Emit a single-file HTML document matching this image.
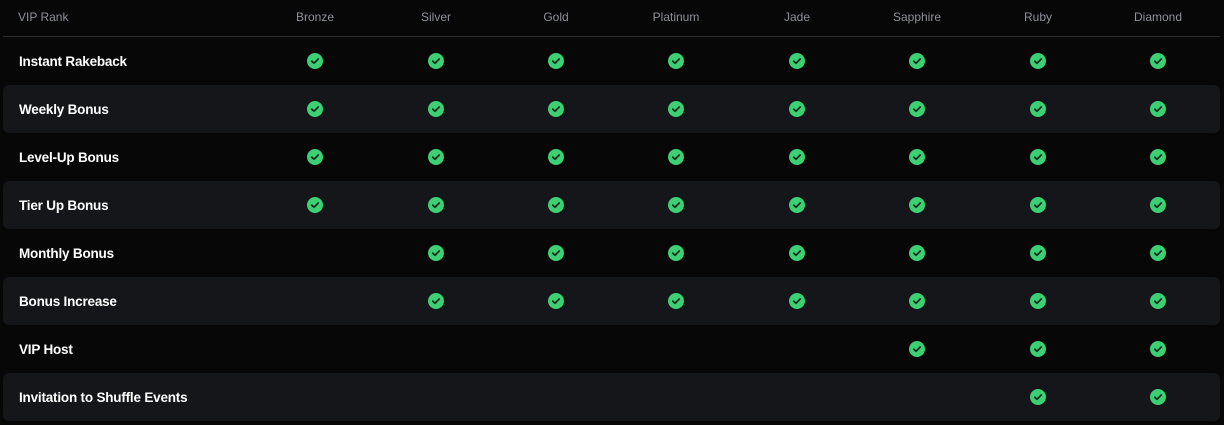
<!DOCTYPE html>
<html><head><meta charset="utf-8"><style>
body{margin:0;width:1224px;height:425px;background:#070708;font-family:"Liberation Sans",sans-serif;position:relative;overflow:hidden}
.h{position:absolute;top:10px;font-size:12px;color:#8d9097;transform:translateX(-50%);white-space:nowrap}
.line{position:absolute;left:3px;right:4px;top:36px;height:1px;background:#2a2c30}
.row{position:absolute;left:3px;width:1217px;height:48px;border-radius:6px}
.s{background:#15161a}
.l{position:absolute;left:16px;top:1px;line-height:48px;font-size:13.5px;font-weight:bold;color:#fff;letter-spacing:-0.2px}
.c{position:absolute;top:16px;width:16px;height:16px;margin-left:-8px}
</style></head><body>
<div class="h" style="left:0;transform:none;left:18px">VIP Rank</div>
<div class="h" style="left:315px">Bronze</div>
<div class="h" style="left:436px">Silver</div>
<div class="h" style="left:556px">Gold</div>
<div class="h" style="left:676px">Platinum</div>
<div class="h" style="left:797px">Jade</div>
<div class="h" style="left:917px">Sapphire</div>
<div class="h" style="left:1038px">Ruby</div>
<div class="h" style="left:1158px">Diamond</div>
<div class="line"></div>
<div id="rows"></div>
<script>
var rows=[["Instant Rakeback",0],["Weekly Bonus",0],["Level-Up Bonus",0],["Tier Up Bonus",0],["Monthly Bonus",1],["Bonus Increase",1],["VIP Host",5],["Invitation to Shuffle Events",6]];
var xs=[315,436,556,676,797,917,1038,1158];
var svg='<svg viewBox="0 0 16 16" width="16" height="16"><circle cx="8" cy="8" r="8" fill="#3ccf74"/><path d="M4.8 8.2l2.2 2.1 4.2-4.3" fill="none" stroke="#0d2a18" stroke-width="1.7" stroke-linecap="round" stroke-linejoin="round"/></svg>';
var h='';
rows.forEach(function(r,i){
 h+='<div class="row'+(i%2?' s':'')+'" style="top:'+(37+i*48)+'px"><div class="l">'+r[0]+'</div>';
 for(var j=r[1];j<8;j++)h+='<div class="c" style="left:'+(xs[j]-3)+'px">'+svg+'</div>';
 h+='</div>';
});
document.getElementById('rows').innerHTML=h;
</script>
</body></html>
